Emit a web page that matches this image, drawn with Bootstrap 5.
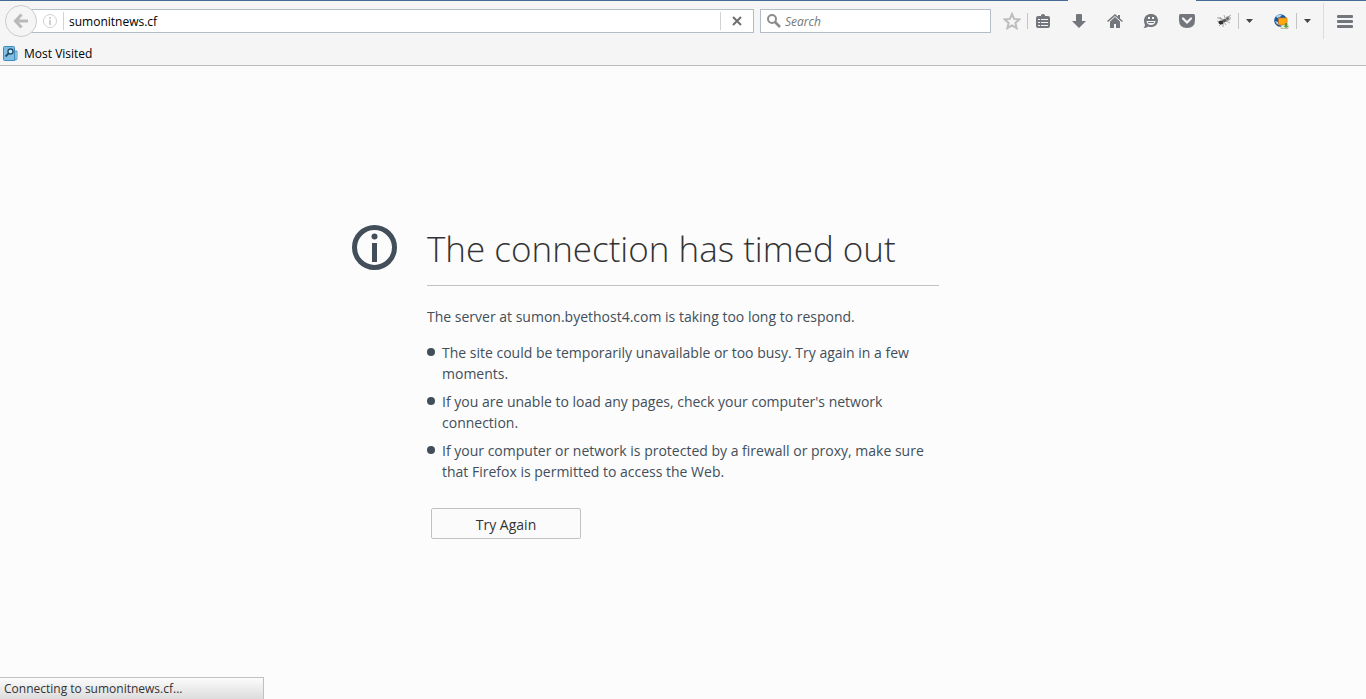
<!DOCTYPE html>
<html lang="en">
<head>
<meta charset="utf-8">
<meta name="viewport" content="width=device-width, initial-scale=1">
<title>Problem loading page</title>
<link rel="stylesheet" href="https://cdn.jsdelivr.net/npm/bootstrap@5.3.0/dist/css/bootstrap.min.css">
<style>
body { font: 12px/16px "Open Sans", "Noto Sans", sans-serif; color: #000; background: #fcfcfc; }
svg { display: block; flex: none; }
.chrome { background: #f5f5f5; border-bottom: 1px solid #b9babb; }
.tab-edge { height: 1px; background: #446b93; }
.tab-gap { width: 128px; height: 1px; }
.tab-end { width: 170px; }
.toolbar { height: 40px; }
.chrome button { border: 0; background: none; padding: 0; display: flex; align-items: center; justify-content: center; height: 32px; flex: none; color: #73777d; }
.chrome .back { width: 32px; margin-left: 5px; border: 1px solid #c9cbcd; border-radius: 50%; background: #f5f5f5; z-index: 1; color: #b9b9b9; }
.field { height: 24px; background: #fff; border: 1px solid #b5bcc8; }
.field input { border: 0; outline: 0; background: none; padding: 2px 0 0; min-width: 0; font-size: 12px; color: #000; }
.address { margin-left: -16px; padding-left: 21px; }
.search { width: 231px; margin-left: 6px; padding-left: 6px; }
.search input { font-style: italic; }
.search input::placeholder { color: #777; opacity: 1; }
.rule { width: 1px; height: 16px; background: #c4c4c4; flex: none; }
.rule-field { height: 18px; background: #d2d2d2; }
.rule-identity { margin: 0 5px 0 6px; }
.rule-menu { height: 36px; margin-left: 5px; background: #dcdcdc; }
.chrome .tool { width: 36px; }
.chrome .tool-star { padding-left: 6px; }
.chrome .tool-narrow { width: 33px; }
.chrome .tool-list { padding-right: 3px; }
.chrome .tool-globe { width: 30px; margin-left: 6px; }
.chrome .drop { width: 21px; color: #444; }
.chrome .menu { width: 42px; }
.chrome .stop { width: 32px; height: 22px; }
.bookmarks { height: 24px; padding: 1px 0 0 3px; }
.bookmarks a { color: #000; gap: 5px; }
.error-grid { display: grid; grid-template-columns: 1fr minmax(0, 512px) 1fr; column-gap: 30px; padding-bottom: 2px; color: #424e5a; font-size: 14px; line-height: 21px; }
.error-grid h1 { font-size: 35px; line-height: 48px; font-weight: 300; color: #333; border-bottom: 1px solid #c1c1c1; padding-bottom: 12px; margin-bottom: 20px; }
.reasons { list-style: none; padding: 0; margin: 15px 0 26px; }
.reasons li { position: relative; padding-left: 15px; margin-bottom: 7px; }
.reasons li::before { content: ""; position: absolute; left: 0; top: 6px; width: 8px; height: 8px; border-radius: 50%; background: #424e5a; }
.retry { width: 150px; height: 31px; margin-left: 4px; padding: 0; border: 1px solid #c1c1c1; border-radius: 2px; background: #fbfbfb; color: #333; font-size: 14px; line-height: 31px; }
.status { width: 264px; height: 22px; padding: 3px 4px 0; border: 1px solid #c0c0c0; border-width: 1px 1px 0 0; background: linear-gradient(#fcfcfc, #dcdcdc); color: #333; }
</style>
</head>
<body class="d-flex flex-column min-vh-100">
<header class="chrome">
  <div class="d-flex"><div class="tab-edge flex-grow-1"></div><div class="tab-gap"></div><div class="tab-edge tab-end"></div></div>
  <nav class="toolbar d-flex align-items-center" aria-label="Navigation">
    <button class="back" type="button" aria-label="Back"><svg width="16" height="16" viewBox="0 0 16 16" fill="none" stroke="currentColor" stroke-width="3"><path d="M8.500 1.500 2.500 8l6 6.500M3 8h12"/></svg></button>
    <div class="field address d-flex align-items-center flex-grow-1">
      <svg width="14" height="14" viewBox="0 0 14 14"><circle cx="7" cy="7" r="6.500" fill="none" stroke="#d0d0d0"/><path d="M6 3h2v2H6zm0 3h2v5H6z" fill="#cfcfcf"/></svg>
      <span class="rule rule-field rule-identity"></span>
      <input class="flex-grow-1" type="text" aria-label="Address" value="sumonitnews.cf">
      <span class="rule rule-field"></span>
      <button class="stop" type="button" aria-label="Stop"><svg width="10" height="10" viewBox="0 0 10 10" stroke="#6e6e6e" stroke-width="2"><path d="m1 1 8 8M9 1 1 9"/></svg></button>
    </div>
    <div class="field search d-flex align-items-center">
      <svg width="14" height="14" viewBox="0 0 14 14" fill="none" stroke="#8c8c8c"><circle cx="5" cy="5" r="4" stroke-width="2"/><path d="m8 8 5 5" stroke-width="2.600"/></svg>
      <input class="flex-grow-1 ms-1" type="text" placeholder="Search" aria-label="Search">
    </div>
    <button class="tool tool-star" type="button" aria-label="Bookmark this page"><svg width="18" height="18" viewBox="0 0 18 18" fill="none" stroke="#bdbdbd" stroke-width="2"><path d="m9 2 2.100 4.900 5.200.5-3.900 3.500 1.200 5.200L9 13.300l-4.600 2.800 1.200-5.200-3.900-3.500 5.200-.5z"/></svg></button>
    <span class="rule"></span>
    <button class="tool-narrow tool-list" type="button" aria-label="Show bookmarks"><svg width="14" height="14" viewBox="0 0 14 14"><path fill="currentColor" d="M5 1q2-2 4 0v1h3q2 0 2 2v8q0 2-2 2H2q-2 0-2-2V4q0-2 2-2h3z"/><path d="M2 5h2v1H2zm3 0h7v1H5zM2 8h2v1H2zm3 0h7v1H5zm-3 3h2v1H2zm3 0h7v1H5z" fill="#f5f5f5"/></svg></button>
    <button class="tool" type="button" aria-label="Downloads"><svg width="14" height="14" viewBox="0 0 14 14" fill="currentColor"><path d="M4 1q0-1 1-1h4q1 0 1 1v6h4l-7 7-7-7h4z"/></svg></button>
    <button class="tool" type="button" aria-label="Home"><svg width="16" height="14" viewBox="0 0 16 14" fill="currentColor"><path d="M8 0 0 7l1 1 7-6 7 6 1-1-3-2.600V1h-2v1.700z"/><path d="m8 3-5 4.500V14h4v-4h2v4h4V7.500z"/></svg></button>
    <button class="tool" type="button" aria-label="Chat"><svg width="16" height="14" viewBox="0 0 16 14"><path fill="currentColor" d="M8 0c4 0 7 2.700 7 6.500S12 13 8 13q-1.500 0-2.700-.5Q3 14 .5 14q1.400-1.300 1.500-3Q1 9 1 6.500C1 2.700 4 0 8 0"/><path fill="#f5f5f5" d="M5 3h2v2H5zm4 0h2v2H9zM3.500 7h9Q12 11 8 11T3.500 7"/><path stroke="#73777d" d="M5 8.500h6"/></svg></button>
    <button class="tool" type="button" aria-label="Pocket"><svg width="16" height="14" viewBox="0 0 16 14"><path fill="currentColor" d="M1.500 0h13Q16 0 16 1.500V6q0 8-8 8T0 6V1.500Q0 0 1.500 0"/><path d="m4 4.500 4 4 4-4" fill="none" stroke="#f5f5f5" stroke-width="2.200" stroke-linecap="round"/></svg></button>
    <button class="tool-narrow ps-1" type="button" aria-label="Firebug"><svg width="16" height="14" viewBox="0 0 16 14"><path d="M1 4q5-1 7 3L5 6M8 6q3-5 6-3 2 3-4 4" fill="#ccc" stroke="#999" stroke-width=".7"/><path d="M3 12l3-3M1 7l4 1M7 13V9M10 11 8 8M14 9l-4-2M5 5 4 3M9 4 8 1M12 3l3-2" stroke="#888" stroke-width=".7"/><ellipse cx="5" cy="8.500" rx="2.500" ry="2" fill="#333"/><ellipse cx="8.500" cy="6.500" rx="2" ry="1.500" fill="#555"/><circle cx="11.500" cy="4.500" r="1.500" fill="#666"/></svg></button>
    <span class="rule"></span>
    <button class="drop" type="button" aria-label="Firebug menu"><svg width="7" height="4" viewBox="0 0 7 4" fill="currentColor"><path d="M0 0h7L3.500 4z"/></svg></button>
    <button class="tool-globe" type="button" aria-label="Proxy"><svg width="15" height="15" viewBox="0 0 15 15"><circle cx="6.500" cy="6.500" r="6.300" fill="#1958a5"/><path d="M2 2q3-2 6-1L6 3 3 4zM1 7l3 1 1 3q-3-1-4-4" fill="#a9d8ef"/><path d="M4.500 4H13v7H4.500z" fill="#ffa711" stroke="#ca7210" stroke-width=".7"/><path d="M7 11h7v3.500H7z" fill="#e7edda" stroke="#949c83" stroke-width=".6"/><path d="M11 9h2v3h1.500l-2.500 2-2.500-2H11z" fill="#519b2f"/></svg></button>
    <span class="rule"></span>
    <button class="drop" type="button" aria-label="Proxy menu"><svg width="7" height="4" viewBox="0 0 7 4" fill="currentColor"><path d="M0 0h7L3.500 4z"/></svg></button>
    <span class="rule rule-menu"></span>
    <button class="menu" type="button" aria-label="Open menu"><svg width="16" height="13" viewBox="0 0 16 13" fill="currentColor"><rect width="16" height="3" rx="1"/><rect y="5" width="16" height="3" rx="1"/><rect y="10" width="16" height="3" rx="1"/></svg></button>
  </nav>
  <div class="bookmarks d-flex align-items-center">
    <a class="d-flex align-items-center text-decoration-none" href="#"><svg width="16" height="16" viewBox="0 0 16 16"><path d="M12 5h2v8q0 1-2 1z" fill="#c5e4f6" stroke="#4995c4"/><path d="M1.500.5h9q1 0 1 1v13h-10q-1 0-1-1v-12q0-1 1-1" fill="#80bde2" stroke="#3f8abb"/><circle cx="7.500" cy="5.500" r="2.500" fill="#d3edfb" stroke="#254f70" stroke-width="1.400"/><path d="m5.500 7.500-3 3" stroke="#254f70" stroke-width="1.800"/></svg>Most Visited</a>
  </div>
</header>
<main class="error-grid flex-grow-1 align-content-center">
  <div class="d-flex justify-content-end"><svg width="45" height="45" viewBox="0 0 45 45"><circle cx="22.500" cy="22.500" r="20" fill="none" stroke="#424e5a" stroke-width="5"/><circle cx="22.500" cy="11.500" r="3" fill="#424e5a"/><path fill="#424e5a" d="M20 18h5v19h-5z"/></svg></div>
  <section>
    <h1>The connection has timed out</h1>
    <p class="mb-0">The server at sumon.byethost4.com is taking too long to respond.</p>
    <ul class="reasons">
      <li>The site could be temporarily unavailable or too busy. Try again in a few moments.</li>
      <li>If you are unable to load any pages, check your computer's network connection.</li>
      <li>If your computer or network is protected by a firewall or proxy, make sure that Firefox is permitted to access the Web.</li>
    </ul>
    <button class="retry btn" type="button">Try Again</button>
  </section>
</main>
<footer class="status fixed-bottom" role="status">Connecting to sumonitnews.cf...</footer>
<script src="https://cdn.jsdelivr.net/npm/bootstrap@5.3.0/dist/js/bootstrap.bundle.min.js"></script>
</body>
</html>
